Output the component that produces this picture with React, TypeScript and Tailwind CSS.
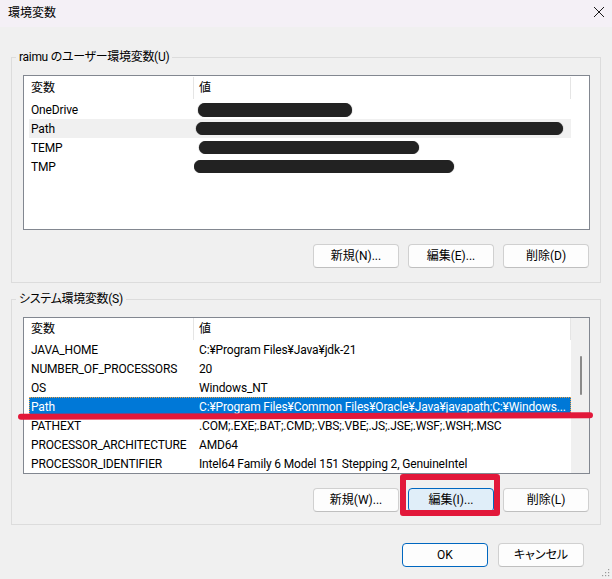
import React from "react";

const FONT = { fontFamily: 'Roboto, "Noto Sans CJK JP", sans-serif', fontFeatureSettings: '"palt"' };

type Row = { name: string; value?: string; blob?: { w: number; ml: number; h: number } };

function Header() {
  return (
    <div className="flex h-[24px] items-center">
      <div className="w-[164px] pl-[2px]">変数</div>
      <div className="h-[22px] w-px bg-[#e5e5e5]" />
      <div className="flex-1 pl-[5px]">値</div>
      <div className="h-[22px] w-px bg-[#e5e5e5]" />
    </div>
  );
}

function Btn({ label, focused, primary }: { label: string; focused?: boolean; primary?: boolean }) {
  const cls = focused
    ? "bg-[#e0eef9] border-[#0067c0]"
    : primary
    ? "bg-[#fdfdfd] border-[#0067c0]"
    : "bg-[#fdfdfd] border-[#d0d0d0] border-b-[#bfbfbf]";
  return (
    <button
      className={`flex h-[24px] w-[86px] items-center justify-center rounded-[4px] border text-[12px] text-black ${cls}`}
      style={FONT}
    >
      {label}
    </button>
  );
}

const userRows: Row[] = [
  { name: "OneDrive", blob: { w: 154, ml: -1, h: 14 } },
  { name: "Path", blob: { w: 367, ml: -3, h: 13 } },
  { name: "TEMP", blob: { w: 220, ml: 0, h: 13 } },
  { name: "TMP", blob: { w: 260, ml: -5, h: 13 } },
];

const sysRows: Row[] = [
  { name: "JAVA_HOME", value: "C:¥Program Files¥Java¥jdk-21" },
  { name: "NUMBER_OF_PROCESSORS", value: "20" },
  { name: "OS", value: "Windows_NT" },
  { name: "Path", value: "C:¥Program Files¥Common Files¥Oracle¥Java¥javapath;C:¥Windows..." },
  { name: "PATHEXT", value: ".COM;.EXE;.BAT;.CMD;.VBS;.VBE;.JS;.JSE;.WSF;.WSH;.MSC" },
  { name: "PROCESSOR_ARCHITECTURE", value: "AMD64" },
  { name: "PROCESSOR_IDENTIFIER", value: "Intel64 Family 6 Model 151 Stepping 2, GenuineIntel" },
];

function DataRow({ r, state }: { r: Row; state?: "hover" | "selected" }) {
  const bg =
    state === "selected"
      ? "bg-[#0078d7] text-white outline outline-1 outline-dotted outline-[#f0a040] -outline-offset-1"
      : state === "hover"
      ? "bg-[#f0f0f0]"
      : "";
  return (
    <div className={`flex h-[19px] shrink-0 items-center whitespace-nowrap tracking-[-0.15px] ${bg}`}>
      <div className="w-[165px] shrink-0 pl-[2px]">{r.name}</div>
      <div className="flex min-w-0 flex-1 items-center overflow-hidden pl-[5px]">
        {r.blob ? (
          <div
            className="shrink-0 rounded-full bg-[#222222] shadow-[0_0_1px_#222]"
            style={{ width: r.blob.w, height: r.blob.h, marginLeft: r.blob.ml }}
          />
        ) : (
          r.value
        )}
      </div>
    </div>
  );
}

export default function App() {
  return (
    <div
      className="relative flex h-[579px] w-[612px] flex-col overflow-hidden bg-[#f0f0f0] text-[12px] leading-[16px] text-black"
      style={FONT}
    >
      {/* Title bar */}
      <div className="flex h-[27px] shrink-0 items-center justify-between bg-[#f4f0f6] pl-[8px] pr-[7px]">
        <span className="mb-[2px] text-[12px]">環境変数</span>
        <svg width="12" height="12" viewBox="0 0 12 12" className="mb-[4px]">
          <path d="M1 1 L11 11 M11 1 L1 11" stroke="#1a1a1a" strokeWidth="1" />
        </svg>
      </div>

      <div className="flex flex-col px-[11px] pt-[22px]">
        {/* User group */}
        <fieldset className="m-0 border border-[#dcdcdc] pb-[14px] pl-[11px] pr-[10px] pt-[10px]">
          <legend className="ml-[-7px] px-[3px] leading-[16px] tracking-[-0.3px]">raimu のユーザー環境変数(U)</legend>
          <div className="flex h-[155px] flex-col border border-[#828790] bg-white pl-[5px]">
            <div className="flex w-[542px] flex-col">
              <Header />
              {userRows.map((r, i) => (
                <DataRow key={r.name} r={r} state={i === 1 ? "hover" : undefined} />
              ))}
            </div>
          </div>
          <div className="mt-[14px] flex justify-end gap-[9px] pr-px">
            <Btn label="新規(N)..." />
            <Btn label="編集(E)..." />
            <Btn label="削除(D)" />
          </div>
        </fieldset>

        {/* System group */}
        <fieldset className="m-0 mt-[8px] border border-[#dcdcdc] pb-[12px] pl-[11px] pr-[10px] pt-[10px]">
          <legend className="ml-[-7px] px-[3px] leading-[16px] tracking-[-0.3px]">システム環境変数(S)</legend>
          <div className="flex h-[157px] border border-[#828790] bg-white pl-[5px]">
            <div className="flex w-[542px] flex-col overflow-hidden">
              <Header />
              {sysRows.map((r, i) => (
                <DataRow key={r.name} r={r} state={i === 3 ? "selected" : undefined} />
              ))}
            </div>
            <div className="flex w-[18px] flex-col items-center bg-[#f0f0f0] pl-px pt-[38px]">
              <div className="h-[39px] w-[2px] rounded-full bg-[#8a8a8a]" />
            </div>
          </div>
          <div className="mt-[14px] flex justify-end gap-[9px] pr-px">
            <Btn label="新規(W)..." />
            <Btn label="編集(I)..." focused />
            <Btn label="削除(L)" />
          </div>
        </fieldset>

        <div className="mt-[18px] flex justify-end gap-[10px] pr-[17px]">
          <Btn label="OK" primary />
          <Btn label="キャンセル" />
        </div>
      </div>

      {/* Annotation overlays */}
      <div className="pointer-events-none absolute left-[18px] top-[413px] h-[6px] w-[575px] -rotate-[0.15deg] rounded-full bg-[#e2183a]" />
      <div className="pointer-events-none absolute left-[400px] top-[474px] h-[42px] w-[100px] rounded-[3px] border-[6px] border-[#e2183a]" />

      {/* Resize grip */}
      <svg className="absolute bottom-[2px] right-[2px]" width="10" height="10" viewBox="0 0 10 10">
        {[
          [8, 2],
          [5, 5],
          [8, 5],
          [2, 8],
          [5, 8],
          [8, 8],
        ].map(([x, y], i) => (
          <rect key={i} x={x} y={y} width="1.2" height="1.2" fill="#9a9a9a" />
        ))}
      </svg>
    </div>
  );
}
